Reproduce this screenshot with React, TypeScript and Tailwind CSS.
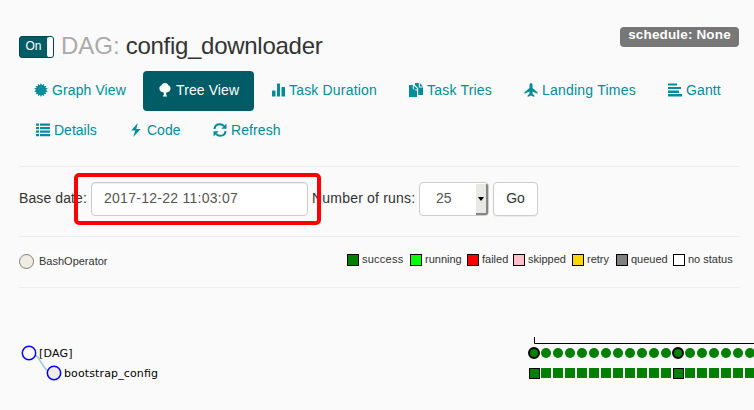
import React from "react";

const starPoints = Array.from({ length: 28 }, (_, i) => {
  const r = i % 2 ? 4.9 : 7;
  const a = (i * Math.PI) / 14 - Math.PI / 2;
  return `${(7 + r * Math.cos(a)).toFixed(2)},${(7 + r * Math.sin(a)).toFixed(2)}`;
}).join(" ");

const icons: Record<string, React.ReactNode> = {
  graph: <polygon points={starPoints} />,
  tree: <path d="M7 0C8.8 0 10 1 10.3 2.2C11.8 2.6 12.6 3.8 12.6 5.3C12.6 7.7 11 9.2 8.2 9.5V11.5C8.2 12.5 9 12.7 9.3 13.5H4.7C5 12.7 5.8 12.5 5.8 11.5V9.5C3 9.2 1.4 7.7 1.4 5.3C1.4 3.8 2.2 2.6 3.7 2.2C4 1 5.2 0 7 0Z" />,
  duration: <path d="M1 8a.5.5 0 0 1 .5-.5h2.500a.5.5 0 0 1 .5.5v5.500H1ZM6 1a.5.5 0 0 1 .5-.5h2a.5.5 0 0 1 .5.5V13.500H6ZM10.500 4.500a.5.5 0 0 1 .5-.5h2.500a.5.5 0 0 1 .5.5V13.500h-3.500Z" />,
  tries: <path d="M0 2H3.800V6L7 7.500H8V14H0ZM4.800 2.500L8 5.700V6.500H4.800ZM6 0H9.800V4.500H14V12H9.200V5.200L6 2ZM10.800 0L14 3.500H10.800Z" />,
  landing: <path d="M7 0C8 0 8.500 1 8.500 2.300V5L13.500 9.200V10.800L8.500 8.500V10.500L10.300 12.500V14L7 12.500L3.700 14V12.500L5.500 10.500V8.500L.5 10.800V9.200L5.500 5V2.300C5.500 1 6 0 7 0Z" />,
  gantt: <path d="M0 .5h9v2H0ZM0 4h13v2H0ZM0 7.500h11v2.500H0ZM0 11h14v2.500H0Z" />,
  details: <path d="M0 .5h3v2.300H0ZM4 .5h10v2.300H4ZM0 4h3v2.300H0ZM4 4h10v2.300H4ZM0 7.500h3v2.300H0ZM4 7.500h10v2.300H4ZM0 11h3v2.300H0ZM4 11h10v2.300H4Z" />,
  code: <path d="M8.700 0L2.300 7.500H6.300L4.200 14L11.700 5.900H7.300Z" />,
  refresh: (
    <>
      <path d="M1.500 6C1.700 3 4 1.200 6.800 1.200C8.500 1.200 10 1.900 11 3.100M12.500 8C12.300 11 10 12.800 7.200 12.800C5.500 12.800 4 12.100 3 10.900" fill="none" stroke="currentColor" strokeWidth="2" />
      <path d="M13.500 .5V5.700H8.300ZM.5 13.500V8.300H5.700Z" />
    </>
  ),
};

function Icon({ name }: { name: string }) {
  return (
    <svg className="h-[14px] w-[14px] shrink-0" viewBox="0 0 14 14" fill="currentColor">
      {icons[name]}
    </svg>
  );
}

const tabs = [
  { icon: "graph", label: "Graph View", size: "w-[122px] tracking-[0.1px]" },
  { icon: "tree", label: "Tree View", size: "w-[111px] tracking-[0.1px]", active: true },
  { icon: "duration", label: "Task Duration", size: "w-[136px] tracking-[0.18px]" },
  { icon: "tries", label: "Task Tries", size: "w-[113px] tracking-[0.2px]" },
  { icon: "landing", label: "Landing Times", size: "w-[142px] tracking-[0.22px]" },
  { icon: "gantt", label: "Gantt", size: "w-[83px] tracking-[0.1px]" },
  { icon: "details", label: "Details", size: "w-[93px] pl-[17px]" },
  { icon: "code", label: "Code", size: "w-[82px]" },
  { icon: "refresh", label: "Refresh", size: "w-[98px] tracking-[0.1px]" },
];

const states = [
  { label: "success", color: "bg-[#008000]", width: "w-[63px] tracking-[0.25px]" },
  { label: "running", color: "bg-[#00ff00]", width: "w-[57px]" },
  { label: "failed", color: "bg-[#ff0000]", width: "w-[46px]" },
  { label: "skipped", color: "bg-[#ffc0cb]", width: "w-[59px]" },
  { label: "retry", color: "bg-[#ffd700]", width: "w-[44px]" },
  { label: "queued", color: "bg-[#808080]", width: "w-[57px]" },
  { label: "no status", color: "bg-white", width: "w-[67px]" },
];

export default function App() {
  const runs = Array.from({ length: 19 }, (_, i) => i);
  return (
    <div className="h-[410px] w-[754px] overflow-hidden bg-[#fafafa] font-['Liberation_Sans',Arial,sans-serif] text-[14px] leading-5 text-[#333]">
      <header className="flex h-[71px] items-start justify-between pr-[15px] pl-[19px]">
        <div className="flex pt-[32px]">
          <div className="mt-[4px] flex h-[22px] w-[35px] rounded-[3px] border border-[#00474d] bg-[#005c66] text-[12px] leading-[18px] text-white">
            <span className="w-[27px] text-center">On</span>
            <span className="h-full w-[6px] rounded-[2px] bg-white" />
          </div>
          <h1 className="ml-[7px] text-[24px] leading-[28px] whitespace-nowrap">
            <span className="text-[#aaa]">DAG:</span>
            <span className="ml-[6px] tracking-[-0.28px]">config_downloader</span>
          </h1>
        </div>
        <span className="mt-[27px] h-[20px] w-[119px] rounded-[4px] bg-[#777] text-center text-[13.500px] leading-[15px] font-bold tracking-[0.15px] whitespace-nowrap text-white">
          schedule: None
        </span>
      </header>

      <nav className="ml-[19px] flex h-[95px] w-[721px] flex-wrap content-start gap-x-[2px]">
        {tabs.map((t) => (
          <a
            key={t.label}
            className={`flex h-10 items-center gap-1 rounded-[4px] pb-[2px] pl-[15px] whitespace-nowrap ${t.size} ${t.active ? "bg-[#005c66] text-white" : "text-[#008c99]"}`}
          >
            <Icon name={t.icon} />
            <span>{t.label}</span>
          </a>
        ))}
      </nav>

      <form className="relative ml-[19px] flex h-[71px] w-[721px] items-start border-y border-[#eee] pt-[15px] whitespace-nowrap">
        <label className="w-[72px] pt-[6px] tracking-[0.1px]">Base date:</label>
        <div className="h-[34px] w-[217px] rounded-[4px] border border-[#ccc] bg-white py-[5px] pl-[12px] tracking-[0.27px] text-[#555] shadow-[inset_0_1px_1px_rgba(0,0,0,0.075)]">
          2017-12-22 11:03:07
        </div>
        <label className="ml-[4px] w-[107px] pt-[6px] tracking-[0.2px]">Number of runs:</label>
        <div className="flex h-[34px] w-[70px] justify-between overflow-hidden rounded-[4px] border border-[#ccc] bg-white text-[#555]">
          <span className="py-[5px] pl-[16px]">25</span>
          <span className="mt-[1px] flex h-[31px] w-[12px] items-center justify-center border-r-2 border-b-2 border-[#858585] bg-[#e8e8e6]">
            <svg className="h-[4px] w-[6px]" viewBox="0 0 6 4"><path d="M0 0H6L3 4Z" /></svg>
          </span>
        </div>
        <button type="button" className="ml-[4px] h-[34px] w-[45px] rounded-[4px] border border-[#ccc] bg-white pb-[2px] shadow-[0_1px_1px_rgba(0,0,0,0.06)]">Go</button>
        <div className="absolute top-[6px] left-[55px] h-[52px] w-[247px] rounded-[5px] border-4 border-[#ff0000]" />
      </form>

      <section className="ml-[19px] flex h-[51px] w-[721px] justify-between border-b border-[#eee] text-[11px] leading-[14px] whitespace-nowrap">
        <div className="flex items-center pb-[2px]">
          <span className="h-[15px] w-[15px] rounded-full border border-[#808078] bg-[#f0ede4]" />
          <span className="ml-[1px] rounded-[5px] bg-[#fcfcfc] px-[4px] py-[2px]">BashOperator</span>
        </div>
        <div className="flex pt-[15px]">
          {states.map((s) => (
            <div key={s.label} className={`flex ${s.width}`}>
              <span className={`mt-[2px] mr-[3px] h-[12px] w-[12px] shrink-0 border border-black ${s.color}`} />
              <span>{s.label}</span>
            </div>
          ))}
        </div>
      </section>

      <svg className="block h-[122px] w-[754px]" viewBox="0 288 754 122">
        <path d="M29 353C42 353 41 373 54 373" fill="none" stroke="#9ecae1" strokeWidth="1.500" />
        <circle cx="29" cy="353" r="6.700" fill="#fff" stroke="#00f" strokeWidth="1.500" />
        <circle cx="54" cy="373" r="6.700" fill="#f0ede4" stroke="#00f" strokeWidth="1.500" />
        <g fontFamily="DejaVu Sans, sans-serif" fontSize="11" fill="#000">
          <text x="39" y="357" textLength="33.500">[DAG]</text>
          <text x="64" y="377" textLength="94">bootstrap_config</text>
        </g>
        <path d="M534.500 337V343.500H754" fill="none" stroke="#000" />
        {runs.map((i) => {
          const x = 534 + i * 12;
          const marked = i % 12 === 0;
          return (
            <g key={i} fill="#008000" stroke={marked ? "#000" : "none"}>
              <circle cx={x} cy="353" r="5" strokeWidth="2" />
              {marked ? <rect x={x - 4.5} y="368.500" width="10" height="10" /> : <rect x={x - 5} y="368" width="10" height="10" />}
            </g>
          );
        })}
      </svg>
    </div>
  );
}
